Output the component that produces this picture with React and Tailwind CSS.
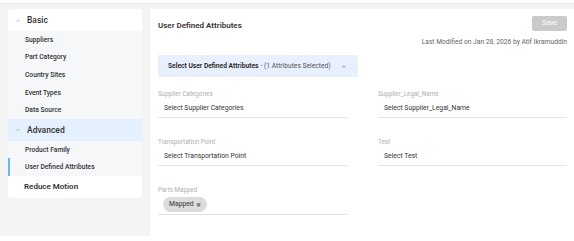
import React from 'react';

const font = { fontFamily: 'Roboto, "Liberation Sans", sans-serif' };

const Chevron = ({ className }) => (
  <svg viewBox="0 0 10 6" className={className} fill="none" stroke="currentColor" strokeWidth="1.3" strokeLinecap="round" strokeLinejoin="round">
    <path d="M1.5 5L5 1.5L8.5 5" />
  </svg>
);

const basicItems = ['Suppliers', 'Part Category', 'Country Sites', 'Event Types', 'Data Source'];

const Field = ({ label, value, className = '' }) => (
  <div className={className}>
    <div className="h-[9px] text-[6.3px] leading-[9px] text-[#b0b0b0]">{label}</div>
    <div className="h-[19px] flex items-center pl-[6px] text-[6.8px] text-[#333] border-b border-[#e2e2e2]">{value}</div>
  </div>
);

const App = () => {
  return (
    <div className="w-[574px] h-[241px] bg-white overflow-hidden flex flex-col" style={font}>
      <div className="h-[4px] shrink-0 border-b border-[#e8e8e8]" />
      <div className="flex items-start">
        <aside className="w-[150px] h-[232px] shrink-0 bg-[#f4f4f4] pl-2 pt-[5px]">
          <div className="w-[134px] bg-white rounded-[3px] overflow-hidden shadow-[0_0_1px_rgba(0,0,0,0.08)]">
            <div className="h-[22px] flex items-center pl-[8px] text-[8.5px] text-[#333] font-medium">
              <Chevron className="w-[4px] h-[3px] mr-[7px] text-[#999]" />
              Basic
            </div>
            <div className="bg-[#f5f7f9]">
              {basicItems.map((item) => (
                <div key={item} className="h-[17.6px] flex items-center pl-[17px] text-[6.7px] font-medium text-[#333]">
                  {item}
                </div>
              ))}
            </div>
            <div className="h-[22px] flex items-center pl-[8px] text-[8.5px] text-[#333] font-medium bg-[#e4f0fd]">
              <Chevron className="w-[4px] h-[3px] mr-[7px] text-[#999]" />
              Advanced
            </div>
            <div className="bg-[#f5f7f9]">
              <div className="h-[17.5px] flex items-center pl-[17px] text-[6.7px] font-medium text-[#333]">Product Family</div>
              <div className="h-[17.5px] flex items-center pl-[15px] text-[6.7px] font-medium text-[#333] border-l-2 border-[#6cb4f4]">User Defined Attributes</div>
            </div>
            <div className="h-[22px] flex items-center pl-[16px] text-[8px] font-semibold text-[#333]">Reduce Motion</div>
          </div>
        </aside>
        <main className="flex-1 border-t-[5px] border-[#f4f4f4] bg-white h-[240px]">
          <div className="flex justify-between pl-2 pr-[7px] pt-[7px]">
            <div className="text-[8px] font-semibold text-[#333] mt-[4px]">User Defined Attributes</div>
            <button className="w-[35px] h-[15px] rounded-[2px] bg-[#cacaca] text-white text-[7px]">Save</button>
          </div>
          <div className="text-right pr-[7px] mt-[5px] text-[6.7px] text-[#666]">Last Modified on Jan 28, 2026 by Atif Ikramuddin</div>
          <div className="ml-2 mt-[8px] w-[200px] h-[22px] bg-[#e8effd] flex items-center pl-[10px] text-[6.7px]">
            <span className="font-semibold text-[#222]">Select User Defined Attributes</span>
            <span className="text-[#555] ml-[2px]">- (1 Attributes Selected)</span>
            <Chevron className="w-[4px] h-[3px] ml-[11px] text-[#333]" />
          </div>
          <div className="grid grid-cols-[189px_189px] gap-x-[31px] gap-y-[20px] pl-2 mt-[13px]">
            <Field label="Supplier Categories" value="Select Supplier Categories" />
            <Field label="Supplier_Legal_Name" value="Select Supplier_Legal_Name" />
            <Field label="Transportation Point" value="Select Transportation Point" />
            <Field label="Test" value="Select Test" />
            <div>
              <div className="h-[9px] text-[6.3px] leading-[9px] text-[#b0b0b0]">Parts Mapped</div>
              <div className="h-[20px] flex items-center pl-[5px] border-b border-[#e2e2e2]">
                <span className="h-[15px] px-[6px] rounded-full bg-[#dcdcdc] flex items-center text-[6.8px] text-[#333]">
                  Mapped<span className="ml-[2px] text-[#777] text-[6px]">✖</span>
                </span>
              </div>
            </div>
          </div>
        </main>
      </div>
    </div>
  );
};

export default App;
